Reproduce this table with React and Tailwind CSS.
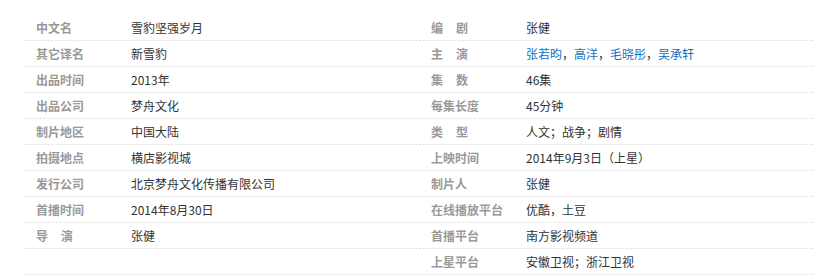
const leftRows = [
  ['中文名', '雪豹坚强岁月'],
  ['其它译名', '新雪豹'],
  ['出品时间', '2013年'],
  ['出品公司', '梦舟文化'],
  ['制片地区', '中国大陆'],
  ['拍摄地点', '横店影视城'],
  ['发行公司', '北京梦舟文化传播有限公司'],
  ['首播时间', '2014年8月30日'],
  ['导演', '张健'],
  ['', ''],
];

const actors = ['张若昀', '高洋', '毛晓彤', '吴承轩'];

const rightRows = [
  ['编剧', '张健'],
  ['主演', 'actors'],
  ['集数', '46集'],
  ['每集长度', '45分钟'],
  ['类型', '人文；战争；剧情'],
  ['上映时间', '2014年9月3日（上星）'],
  ['制片人', '张健'],
  ['在线播放平台', '优酷，土豆'],
  ['首播平台', '南方影视频道'],
  ['上星平台', '安徽卫视；浙江卫视'],
];

function Label({ text }) {
  // 两个字的标签中间留空
  if (text.length === 2) {
    return (
      <span>
        {text[0]}
        <span className="ml-[13px]">{text[1]}</span>
      </span>
    );
  }
  return <span>{text}</span>;
}

function Value({ value }) {
  if (value === 'actors') {
    return (
      <span>
        {actors.map((name, i) => (
          <span key={name}>
            <span className="text-[#136ec2]">{name}</span>
            {i < actors.length - 1 && '，'}
          </span>
        ))}
      </span>
    );
  }
  return <span>{value}</span>;
}

function InfoList({ rows }) {
  return (
    <div className="w-[395px] flex flex-col">
      {rows.map(([label, value], i) => (
        <div
          key={i}
          className="flex h-[26px] items-center bg-[linear-gradient(to_right,#dcdcdc_50%,transparent_50%)] bg-[length:4px_1px] bg-repeat-x bg-bottom"
        >
          <div className="w-[107px] pl-[12px] shrink-0 font-bold text-[#999]">
            <Label text={label} />
          </div>
          <div className="text-[#333]">
            <Value value={value} />
          </div>
        </div>
      ))}
    </div>
  );
}

export default function App() {
  return (
    <div
      className="w-[831px] h-[278px] bg-white pt-[15px] pl-[24px] text-[12px] leading-[26px]"
      style={{ fontFamily: '"Noto Sans CJK SC", "Liberation Sans", sans-serif' }}
    >
      <div className="flex">
        <InfoList rows={leftRows} />
        <InfoList rows={rightRows} />
      </div>
    </div>
  );
}
